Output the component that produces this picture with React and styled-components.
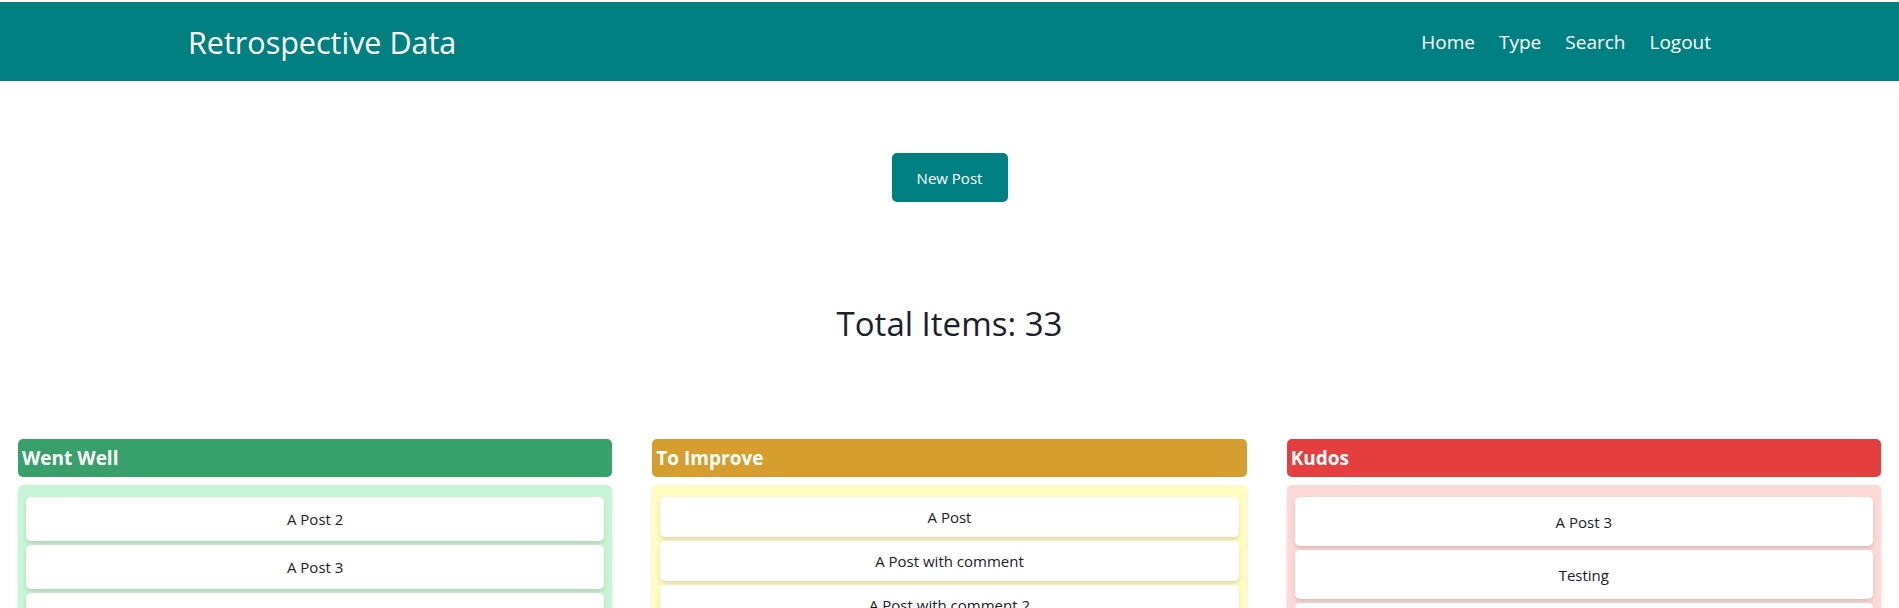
import React from "react";
import styled, { createGlobalStyle } from "styled-components";

const GlobalStyle = createGlobalStyle`
  * { box-sizing: border-box; }
  html, body { margin: 0; padding: 0; background: #ffffff; }
  body {
    font-family: "Open Sans", "Noto Sans", Arial, sans-serif;
    color: #1a202c;
    -webkit-font-smoothing: antialiased;
  }
`;

const Page = styled.div`
  display: flex;
  flex-direction: column;
  padding-top: 2px;
  background: #ffffff;
`;

const NavBar = styled.nav`
  height: 79px;
  background: #008080;
  display: flex;
  align-items: center;
  justify-content: space-between;
  padding: 0 188px 0 188px;
`;

const Brand = styled.a`
  color: #ffffff;
  font-size: 30.5px;
  text-decoration: none;
  line-height: 1;
  margin-top: 2px;
`;

const NavLinks = styled.div`
  display: flex;
  align-items: center;
  gap: 24px;
  margin-top: 2px;
`;

const NavLink = styled.a`
  color: #ffffff;
  font-size: 19px;
  text-decoration: none;
  line-height: 1;
`;

const Main = styled.main`
  display: flex;
  flex-direction: column;
  align-items: center;
`;

const PrimaryButton = styled.button`
  margin-top: 72px;
  height: 49px;
  width: 116px;
  background: #008080;
  color: #ffffff;
  border: none;
  border-radius: 5px;
  font-family: inherit;
  font-size: 15px;
  cursor: pointer;
`;

const Total = styled.h2`
  margin: 100px 0 0;
  font-size: 33px;
  font-weight: 400;
  line-height: 43px;
  color: #1a202c;
`;

const Board = styled.section`
  align-self: stretch;
  margin-top: 94px;
  padding: 0 18px;
  display: grid;
  grid-template-columns: repeat(3, 1fr);
  column-gap: 40px;
  align-items: start;
`;

const Column = styled.div`
  display: flex;
  flex-direction: column;
  gap: 8px;
`;

const ColumnHeader = styled.h3`
  margin: 0;
  height: 38px;
  display: flex;
  align-items: center;
  padding-left: 4px;
  border-radius: 5px;
  background: ${(p) => p.$color};
  color: #ffffff;
  font-size: 19px;
  font-weight: 700;
`;

const Panel = styled.div`
  display: flex;
  flex-direction: column;
  gap: 4px;
  padding: 12px 8px;
  border-radius: 5px;
  background: ${(p) => p.$bg};
  box-shadow: 0 4px 6px -1px rgba(0, 0, 0, 0.1), 0 2px 4px -1px rgba(0, 0, 0, 0.06);
`;

const Card = styled.div`
  height: ${(p) => p.$h}px;
  display: flex;
  align-items: center;
  justify-content: center;
  background: #ffffff;
  border-radius: 5px;
  box-shadow: 0 4px 6px -1px rgba(0, 0, 0, 0.1), 0 2px 4px -1px rgba(0, 0, 0, 0.06);
  font-size: 15px;
  color: #1a202c;
`;

const columns = [
  {
    title: "Went Well",
    color: "#38a169",
    bg: "#c6f6d5",
    h: 44,
    items: ["A Post 2", "A Post 3", "A Post 4"],
  },
  {
    title: "To Improve",
    color: "#d69e2e",
    bg: "#fefcbf",
    h: 40,
    items: ["A Post", "A Post with comment", "A Post with comment 2"],
  },
  {
    title: "Kudos",
    color: "#e53e3e",
    bg: "#fed7d7",
    h: 49,
    items: ["A Post 3", "Testing", "Thanks team"],
  },
];

export default function App() {
  return (
    <>
      <GlobalStyle />
      <Page>
        <NavBar>
          <Brand href="#">Retrospective Data</Brand>
          <NavLinks>
            <NavLink href="#">Home</NavLink>
            <NavLink href="#">Type</NavLink>
            <NavLink href="#">Search</NavLink>
            <NavLink href="#">Logout</NavLink>
          </NavLinks>
        </NavBar>
        <Main>
          <PrimaryButton>New Post</PrimaryButton>
          <Total>Total Items: 33</Total>
          <Board>
            {columns.map((c) => (
              <Column key={c.title}>
                <ColumnHeader $color={c.color}>{c.title}</ColumnHeader>
                <Panel $bg={c.bg}>
                  {c.items.map((it) => (
                    <Card key={it} $h={c.h}>
                      {it}
                    </Card>
                  ))}
                </Panel>
              </Column>
            ))}
          </Board>
        </Main>
      </Page>
    </>
  );
}
